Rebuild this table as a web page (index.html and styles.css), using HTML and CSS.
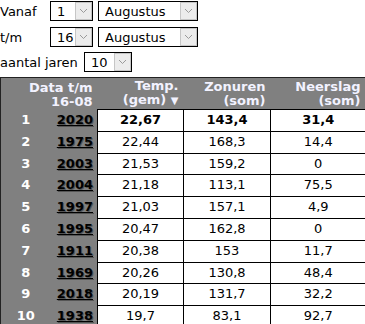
FILE: index.html
```html
<!DOCTYPE html>
<html lang="nl">
<head>
<meta charset="utf-8">
<title>Warmste perioden</title>
<link rel="stylesheet" href="styles.css">
</head>
<body>
<form class="filters">
  <div class="row row-1">
    <span class="lbl">Vanaf</span>
    <label class="sel sel-day"><select><option>1</option></select><span class="arr"><svg width="9" height="6" viewBox="0 0 9 6"><path d="M1 1 L4.5 4.5 L8 1" fill="none" stroke="#9a9a9a" stroke-width="1"/></svg></span></label>
    <label class="sel sel-month"><select><option>Augustus</option></select><span class="arr"><svg width="9" height="6" viewBox="0 0 9 6"><path d="M1 1 L4.5 4.5 L8 1" fill="none" stroke="#9a9a9a" stroke-width="1"/></svg></span></label>
  </div>
  <div class="row row-2">
    <span class="lbl">t/m</span>
    <label class="sel sel-day"><select><option>16</option></select><span class="arr"><svg width="9" height="6" viewBox="0 0 9 6"><path d="M1 1 L4.5 4.5 L8 1" fill="none" stroke="#9a9a9a" stroke-width="1"/></svg></span></label>
    <label class="sel sel-month"><select><option>Augustus</option></select><span class="arr"><svg width="9" height="6" viewBox="0 0 9 6"><path d="M1 1 L4.5 4.5 L8 1" fill="none" stroke="#9a9a9a" stroke-width="1"/></svg></span></label>
  </div>
  <div class="row row-3">
    <span class="lbl lbl-wide">aantal jaren</span>
    <label class="sel sel-years"><select><option>10</option></select><span class="arr"><svg width="9" height="6" viewBox="0 0 9 6"><path d="M1 1 L4.5 4.5 L8 1" fill="none" stroke="#9a9a9a" stroke-width="1"/></svg></span></label>
  </div>
</form>
<table class="data">
  <colgroup>
    <col class="c-rank"><col class="c-year"><col class="c-temp"><col class="c-zon"><col class="c-neer">
  </colgroup>
  <thead>
    <tr>
      <th colspan="2">Data t/m<br>16-08</th>
      <th>Temp.<br>(gem) <span class="sort">▼</span></th>
      <th>Zonuren<br>(som)</th>
      <th>Neerslag<br>(som)</th>
    </tr>
  </thead>
  <tbody>
    <tr class="top"><td class="rank">1</td><td class="year"><a href="#">2020</a></td><td>22,67</td><td>143,4</td><td class="last">31,4</td></tr>
    <tr><td class="rank">2</td><td class="year"><a href="#">1975</a></td><td>22,44</td><td>168,3</td><td class="last">14,4</td></tr>
    <tr><td class="rank">3</td><td class="year"><a href="#">2003</a></td><td>21,53</td><td>159,2</td><td class="last">0</td></tr>
    <tr><td class="rank">4</td><td class="year"><a href="#">2004</a></td><td>21,18</td><td>113,1</td><td class="last">75,5</td></tr>
    <tr><td class="rank">5</td><td class="year"><a href="#">1997</a></td><td>21,03</td><td>157,1</td><td class="last">4,9</td></tr>
    <tr><td class="rank">6</td><td class="year"><a href="#">1995</a></td><td>20,47</td><td>162,8</td><td class="last">0</td></tr>
    <tr><td class="rank">7</td><td class="year"><a href="#">1911</a></td><td>20,38</td><td>153</td><td class="last">11,7</td></tr>
    <tr><td class="rank">8</td><td class="year"><a href="#">1969</a></td><td>20,26</td><td>130,8</td><td class="last">48,4</td></tr>
    <tr><td class="rank">9</td><td class="year"><a href="#">2018</a></td><td>20,19</td><td>131,7</td><td class="last">32,2</td></tr>
    <tr><td class="rank">10</td><td class="year"><a href="#">1938</a></td><td>19,7</td><td>83,1</td><td class="last">92,7</td></tr>
  </tbody>
</table>
</body>
</html>
```
FILE: styles.css
```css
html {
  overflow: hidden;
}
body {
  margin: 0;
  background: #fff;
  color: #000;
  font-family: Verdana, "DejaVu Sans", sans-serif;
  font-size: 13px;
}
.filters {
  display: flex;
  flex-direction: column;
  padding-top: 1px;
  margin: 0;
}
.row {
  display: flex;
  align-items: center;
  height: 20px;
}
.row-2 {
  margin-top: 6px;
}
.row-3 {
  margin-top: 5px;
}
.lbl {
  width: 50px;
  flex: none;
}
.lbl-wide {
  width: 84px;
}
.sel {
  display: flex;
  box-sizing: border-box;
  height: 20px;
  border: 1px solid #000;
  background: #fff;
  margin-right: 5px;
}
.sel-day {
  width: 43px;
}
.sel-month {
  width: 100px;
}
.sel-years {
  width: 48px;
}
.sel select {
  appearance: none;
  -webkit-appearance: none;
  border: 0;
  background: transparent;
  font: inherit;
  color: #000;
  padding: 0 0 0 6px;
  margin: 0;
  flex: 1;
  min-width: 0;
  outline: none;
}
.arr {
  flex: none;
  width: 17px;
  box-sizing: border-box;
  border: 1px solid #c6c6c6;
  background: #ececec;
  display: flex;
  align-items: center;
  justify-content: center;
}
.data {
  margin-top: 5px;
  width: 365px;
  table-layout: fixed;
  border-collapse: collapse;
  border-top: 1px solid #222;
  border-left: 1px solid #222;
}
.c-rank { width: 50px; }
.c-year { width: 47px; }
.c-temp { width: 86px; }
.c-zon { width: 87px; }
.c-neer { width: 95px; }
.data th {
  background: #808080;
  color: #f2f2ff;
  font-weight: bold;
  text-align: right;
  vertical-align: bottom;
  line-height: 14px;
  padding: 1px 5px 1px 0;
  white-space: nowrap;
}
.sort {
  font-size: 10px;
}
.data td {
  background: #fff;
  border: 1px solid #000;
  text-align: center;
  line-height: 14.8px;
  padding: 3px 0;
  white-space: nowrap;
}
.data td.last {
  border-right: 0;
}
.data td.rank,
.data td.year {
  background: #808080;
  border-top: 0;
  border-bottom: 0;
  border-left: 0;
  font-weight: bold;
}
.data td.rank {
  color: #fff;
  text-align: center;
  border-right: 0;
}
.data td.year {
  text-align: right;
  padding-right: 4px;
}
.year a {
  color: #000;
  text-decoration: underline;
  text-shadow: 1px 1px 0 #555;
}
.top td {
  font-weight: bold;
}
```
